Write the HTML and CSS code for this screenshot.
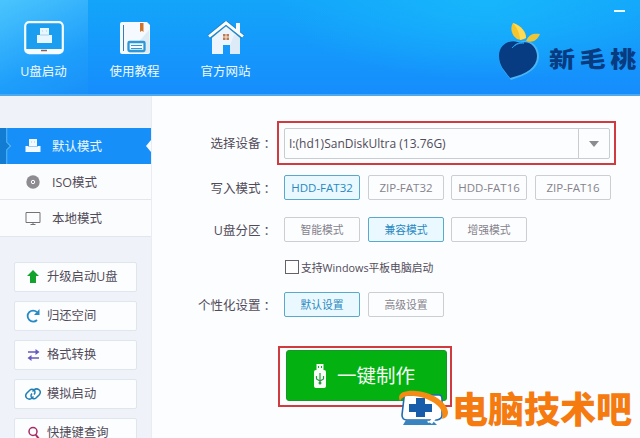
FILE: index.html
```html
<!DOCTYPE html>
<html lang="zh-CN">
<head>
<meta charset="utf-8">
<title>新毛桃</title>
<link rel="stylesheet" href="styles.css">
</head>
<body>
<div class="app">
  <header class="header">
    <nav class="tabs">
      <a class="tab tab-active">
        <svg width="40" height="34" viewBox="0 0 40 34"><rect x="1.2" y="1.2" width="37.6" height="31" rx="4" fill="#1b9df0" stroke="#f6fcff" stroke-width="2.2"/><path d="M2 28h36v2q0 2-3 2H5q-3 0-3-2z" fill="#f6fcff"/><path d="M16 7h9v7h3v8H13v-8h3z" fill="#e7f6ff"/><path d="M18 10h1m3 0h1M16 14h9" stroke="#a9d3eb"/><path d="M17 29.500h6" stroke="#965b51" stroke-width="1.500"/></svg>
        <span>U盘启动</span>
      </a>
      <a class="tab tab-guide">
        <svg width="40" height="34" viewBox="0 0 40 34"><path d="M7 1h25l3 3v27q0 2-2 2H7q-2 0-2-2V3q0-2 2-2z" fill="#f4faff"/><path d="m34 9-20 23h19q2 0 2-2z" fill="#dcebf6"/><path d="M8.500 4v26" stroke="#397fae"/><path d="M25 2h3.500v9l-1.700-1.200L25 11z" fill="#cf7529"/><rect x="13.500" y="21" width="16" height="9" rx="1" fill="#f4faff" stroke="#2e98d7" stroke-width="2.300"/><path d="M16 24.500h11M16 27.500h11" stroke="#2e98d7"/></svg>
        <span>使用教程</span>
      </a>
      <a class="tab tab-home">
        <svg width="40" height="34" viewBox="0 0 40 34"><path d="M30 2h4v12l-4-4z" fill="#f7fbff"/><path d="M6 15 20 3l14 12v18H24v-9h-7v9H6z" fill="#edf5fc"/><path d="M28 14 24 24v9h10V15z" fill="#dcebf7"/><path d="M3 16 20 2l17 14" fill="none" stroke="#2187c9" stroke-width="5"/><path d="M30 2h4v10l-4-3z" fill="#f7fbff"/><path d="M3 15.500 20 1.800l17 13.700" fill="none" stroke="#fff" stroke-width="2.800"/><path d="M17 13h6v6h-6z" fill="#bd7d52"/><path d="M20 13v6m-3-3h6" stroke="#f4e8df"/></svg>
        <span>官方网站</span>
      </a>
    </nav>
    <div class="brand">
      <svg width="44" height="58" viewBox="0 0 44 58"><path d="M13 58C7 50 1 45 1 34 1 23 12 16 22 20c9-4 19 3 19 14 0 13-12 19-28 24z" fill="#4bb5f3"/><path d="M12 56C7 49 1 44 1 34 1 23 11 17 20 20l3 1c8-3 16 4 16 13 0 11-10 18-27 22z" fill="#073c83"/><path d="M14 26c4-5 8-6 12-5-5 0-8 1-12 5z" fill="#26a1ed" stroke="#26a1ed"/><path d="M19 17C13 13 12 5 15 1c8 2 14 10 13 15q-4 3-9 1z" fill="#f5c52e"/><path d="M22 18c0-7-3-12-7-17 8 3 12 8 13 15z" fill="#ffdc58"/><path d="M28 19c3-7 8-8 14-7-3 7-8 9-14 7z" fill="#ecc638"/></svg>
      <span>新毛桃</span>
    </div>
    <i class="minimize"></i>
  </header>
  <div class="body">
    <aside class="sidebar">
      <nav class="modes">
        <a class="mode mode-active"><svg width="16" height="16" viewBox="0 0 16 16"><path d="M4 1h8v7h3.500v6H.5V8H4z" fill="#f3faff"/><path d="M6 4h1m2 0h1M3 8.500h10" stroke="#9ccdf0"/></svg><span>默认模式</span></a>
        <a class="mode"><svg width="16" height="16" viewBox="0 0 16 16"><circle cx="8" cy="8" r="6.700" fill="#8e8c90"/><circle cx="8" cy="8" r="1.700" fill="#8e8c90" stroke="#fff"/></svg><span>ISO模式</span></a>
        <a class="mode"><svg width="16" height="16" viewBox="0 0 16 16"><path d="M1 2.500h14v10H1z" fill="none" stroke="#777079"/><path d="M5.500 14.500h5M8 12v2" stroke="#777079"/></svg><span>本地模式</span></a>
      </nav>
      <div class="tools">
        <a class="tool"><svg width="16" height="16" viewBox="0 0 16 16"><path d="m8 1 6 6h-3v7H5V7H2z" fill="#12a32d"/></svg><span>升级启动U盘</span></a>
        <a class="tool"><svg width="16" height="16" viewBox="0 0 16 16"><path d="M12 4.200A5.500 5.500 0 1 0 12 12" fill="none" stroke="#268ac5" stroke-width="1.800"/><path d="M14.500 1v6H9z" fill="#268ac5"/></svg><span>归还空间</span></a>
        <a class="tool"><svg width="16" height="16" viewBox="0 0 16 16"><path d="M3 5h9M5 11h9" stroke="#6659bd" stroke-width="1.600"/><path d="m10.500 2 4 3-4 3zM6.500 8l-4 3 4 3z" fill="#6659bd"/></svg><span>格式转换</span></a>
        <a class="tool"><svg width="16" height="16" viewBox="0 0 16 16"><g fill="none" stroke="#2080b5" stroke-width="1.500"><path d="M8.500 10.500 7 12c-2 2-4 1-5.300 0-1.500-1.500-1-3.400 0-4.700L5 4c2-2 5 0 5 2 0 1-.5 2-1 2.500"/><path d="M7.500 5.500 9 4c2-2 4-1 5.300 0 1.500 1.500 1 3.400 0 4.700L11 12c-2 2-5 0-5-2 0-1 .5-2 1-2.500"/></g></svg><span>模拟启动</span></a>
        <a class="tool"><svg width="16" height="16" viewBox="0 0 16 16"><circle cx="8" cy="6.500" r="4" fill="none" stroke="#a82a65" stroke-width="1.500"/><path d="m10.500 9.500 4 5" stroke="#a82a65" stroke-width="2"/></svg><span>快捷键查询</span></a>
      </div>
    </aside>
    <main class="main">
      <div class="row row-device">
        <span class="label">选择设备<i>：</i></span>
        <div class="highlight"><div class="select"><span>I:(hd1)SanDiskUltra (13.76G)</span><b class="arrow"><svg width="10" height="6" viewBox="0 0 10 6"><path d="M0 0h10L5 6z" fill="#8b8b90"/></svg></b></div></div>
      </div>
      <div class="row row-write">
        <span class="label">写入模式<i>：</i></span>
        <div class="options"><span class="option selected latin">HDD-FAT32</span><span class="option latin">ZIP-FAT32</span><span class="option latin">HDD-FAT16</span><span class="option latin">ZIP-FAT16</span></div>
      </div>
      <div class="row row-part">
        <span class="label">U盘分区<i>：</i></span>
        <div class="options"><span class="option">智能模式</span><span class="option selected">兼容模式</span><span class="option">增强模式</span></div>
      </div>
      <div class="row row-check"><i class="checkbox"></i><span>支持Windows平板电脑启动</span></div>
      <div class="row row-custom">
        <span class="label">个性化设置<i>：</i></span>
        <div class="options"><span class="option selected">默认设置</span><span class="option">高级设置</span></div>
      </div>
      <div class="make-frame">
        <div class="make"><svg width="14" height="26" viewBox="0 0 14 26"><path d="M3.500 7V1h7v6" fill="#f8fff5"/><path d="M5 3h1v2H5zm3 0h1v2H8z" fill="#17a81c"/><rect x="1" y="7" width="12" height="18" rx="2" fill="#f8fff5"/><path d="M7 10v11M3.500 13v3L7 18l3.500-2v-3" fill="none" stroke="#2c9545" stroke-width="1.200"/><circle cx="7" cy="20" r="1.500" fill="#2c9545"/></svg><span>一键制作</span></div>
      </div>
    </main>
  </div>
  <div class="watermark">
    <svg width="52" height="37" viewBox="0 0 52 37"><path d="M8 5h33q3 0 3 4v16q0 4-5 5H9q-5 0-5-5L6 8q0-3 2-3z" fill="#fff" stroke="#236baf" stroke-width="1.600"/><path d="M9 7h26l5 4v14l-2 2H10q-3-1-3-4z" fill="#fff"/><path d="m8 30-3 5h34l-4-4-5 2-1-3z" fill="#3983be"/><path d="m31 32 4-5 5-1-6 8" fill="#fff"/><path d="M18 8h9v6h7v8h-7v5h-9v-5h-7v-8h7z" fill="#185da9"/><path d="M2 11C-2 3 7 0 18 1c16 1 31 11 32 21 0 5-3 6-6 7 3-9-6-17-18-21C16 5 5 4 2 11z" fill="#f58a14"/></svg>
    <span>电脑技术吧</span>
  </div>
</div>
</body>
</html>
```
FILE: styles.css
```css
* { box-sizing: border-box; }
body { margin: 0; overflow: hidden; font-family: "Open Sans", "Noto Sans CJK SC", sans-serif; font-size: 13px; color: #514b58; }
svg { display: block; flex: none; }
.app { position: relative; width: 640px; height: 438px; overflow: hidden; display: flex; flex-direction: column; background: #fcfdff; }
.header { position: relative; flex: none; height: 96px; display: flex; justify-content: space-between; border-bottom: 2px solid #4ea9ed; background: radial-gradient(ellipse 210px 80px at 485px 0, #17b6fc 0%, transparent 100%), linear-gradient(#13a5fa, #168dfc); }
.tabs { display: flex; }
.tab { width: 92px; padding-top: 21px; display: flex; flex-direction: column; align-items: center; gap: 7px; color: #f2faff; font-size: 12.5px; line-height: 20px; white-space: nowrap; }
.tab-active { width: 88px; padding-right: 1px; background: linear-gradient(155deg, #4bc5fd, #1e9efb 65%, #1990f8); }
.tab-guide { padding-left: 1px; }
.tab-home { padding-right: 1px; }
.brand { display: flex; align-items: flex-start; padding-top: 22px; width: 142px; gap: 7px; color: #083b80; }
.brand span { width: 78px; height: 36px; margin-top: 17px; font: 900 22px/36px "Noto Sans CJK SC", sans-serif; letter-spacing: 4px; white-space: nowrap; transform: scaleX(1.18); transform-origin: 0 50%; }
.minimize { position: absolute; right: 15px; top: 10px; width: 11px; height: 2px; background: #e8faff; }
.body { flex: 1; display: flex; min-height: 0; }
.sidebar { width: 152px; flex: none; padding-top: 32px; background: #eff3f9; border-right: 1px solid #e9edf3; }
.modes { display: flex; flex-direction: column; }
.mode { position: relative; height: 36px; display: flex; align-items: center; gap: 11px; padding-left: 25px; background: #fbfcfe; border-bottom: 1px solid #e3e7ed; line-height: 20px; font-size: 12.5px; }
.mode span { padding-top: 2px; }
.mode:last-child { height: 37px; }
.mode-active { background: linear-gradient(90deg, #127bd2 0, #127bd2 6px, #55b7f3 6px, #168ff8 8px); color: #edf8ff; border: 0; }
.mode-active::before { content: ""; position: absolute; left: 4px; top: 15px; width: 5px; height: 5px; background: #127bd2; border: solid #55b7f3; border-width: 1px 1px 0 0; transform: rotate(45deg); }
.mode-active::after { content: ""; position: absolute; right: 0; top: 12px; border: solid transparent; border-width: 6px 5px 6px 0; border-right-color: #f9fcff; }
.tools { display: flex; flex-direction: column; gap: 9px; padding: 25px 14px 0; }
.tool { height: 30px; flex: none; display: flex; align-items: center; gap: 6px; padding-left: 10px; border: 1px solid #e0e6ed; border-radius: 2px; background: #fcfdff; font-size: 12.3px; white-space: nowrap; line-height: 20px; }
.main { flex: 1; padding: 25px 0 0 46px; display: flex; flex-direction: column; align-items: flex-start; }
.row { display: flex; align-items: center; }
.label { width: 80px; padding: 2px 2px 0 0; text-align: right; font-size: 12.5px; line-height: 20px; white-space: nowrap; }
.label i { font-style: normal; margin-left: 3px; }
.row-device { height: 44px; }
.highlight { width: 339px; height: 44px; margin-left: -1px; border: 2px solid #cf3b3f; padding: 5px 4px 5px 5px; }
.select { height: 31px; border: 1px solid #c9ccd0; border-radius: 2px; display: flex; align-items: center; justify-content: space-between; padding-left: 4px; font-size: 12px; }
.arrow { height: 100%; width: 31px; border-left: 1px solid #c9ccd0; display: flex; align-items: center; justify-content: center; }
.options { display: flex; gap: 8px; padding-left: 6px; }
.option { width: 76px; height: 25px; border: 1px solid #cbced2; border-radius: 2px; text-align: center; line-height: 23px; font-size: 10.8px; color: #85838b; white-space: nowrap; }
.option:nth-child(3) { margin-left: -1px; }
.latin { font-size: 11.5px; }
.selected { background: #eaf8ff; border-color: #5ba9ca; color: #2888c0; }
.row-write { margin-top: 10px; height: 25px; }
.row-part { margin-top: 17px; height: 25px; }
.row-check { margin: 18px 0 0 87px; height: 14px; gap: 2px; font-size: 10.8px; }
.checkbox { width: 14px; height: 14px; border: 1px solid #65616b; background: #fff; }
.row-custom { margin-top: 18px; height: 25px; }
.make-frame { width: 174px; height: 61px; border: 2px solid #cf3b3f; margin: 29px 0 0 80px; padding: 2px 3px 4px 6px; }
.make { height: 51px; border: 1px solid #169728; border-radius: 3px; background: #03b111; color: #f5fff4; display: flex; align-items: center; gap: 10px; padding-left: 26px; font-size: 19.5px; line-height: 28px; white-space: nowrap; }
.watermark { position: absolute; left: 398px; top: 390px; display: flex; color: #f57a10; }
.watermark span { font: 900 36px/40px "Noto Sans CJK SC", sans-serif; white-space: nowrap; margin: -3px 0 0 2px; }
```
